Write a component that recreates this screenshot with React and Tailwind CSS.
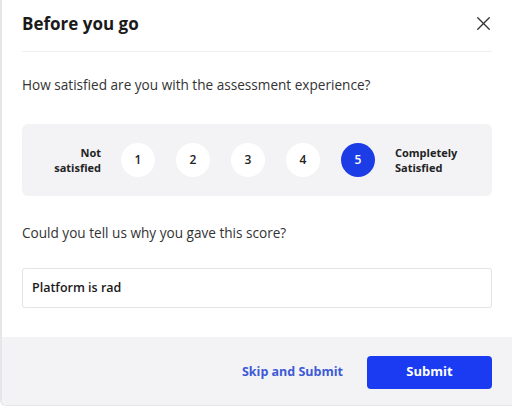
import { X } from "lucide-react";

export default function App() {
  const scores = [1, 2, 3, 4, 5];
  const selected = 5;

  return (
    <div
      className="w-[512px] h-[407px] overflow-hidden bg-white"
      style={{ fontFamily: '"Open Sans", sans-serif' }}
    >
      <div className="h-[406px] flex flex-col border-l-2 border-b border-[#e6e6ea] rounded-bl-md bg-white text-[#222]">
        {/* Header */}
        <div className="mx-[20px] h-[52px] flex items-center justify-between border-b border-[#efeff2]">
          <h2 className="text-[17px] font-bold text-[#1a1a1a] leading-none mt-[-4px]">Before you go</h2>
          <button type="button" className="mr-[-3px] mt-[-4px] text-[#333]">
            <X size={23} strokeWidth={1.4} />
          </button>
        </div>

        {/* Body */}
        <div className="px-[20px] flex-1">
          <p className="mt-[23px] text-[13.6px] text-[#333] leading-5">
            How satisfied are you with the assessment experience?
          </p>

          <div className="mt-[29px] h-[72px] rounded-md bg-[#f3f3f6] flex items-center justify-center gap-[20px]">
            <div className="w-[62px] text-right text-[11px] font-bold leading-[15px] text-[#222]">
              Not<br />satisfied
            </div>
            <div className="flex gap-[21px]">
              {scores.map((n) => (
                <div
                  key={n}
                  className={`w-[34px] h-[34px] rounded-full flex items-center justify-center text-[12px] font-semibold ${
                    n === selected ? "bg-[#1c3de6] text-white" : "bg-white text-[#222]"
                  }`}
                >
                  {n}
                </div>
              ))}
            </div>
            <div className="w-[80px] text-left text-[11px] font-bold leading-[15px] text-[#222]">
              Completely<br />Satisfied
            </div>
          </div>

          <p className="mt-[27px] text-[13.6px] text-[#333] leading-5">
            Could you tell us why you gave this score?
          </p>

          <div className="mt-[25px] h-[40px] border border-[#e4e4e8] rounded-[3px] flex items-center px-[9px]">
            <span className="text-[12.5px] font-semibold text-[#1a1a1a]">Platform is rad</span>
          </div>
        </div>

        {/* Footer */}
        <div className="h-[68px] bg-[#f3f3f6] rounded-bl-md flex items-center justify-end gap-[24px] pr-[20px] pt-[2px]">
          <button type="button" className="text-[12.5px] font-bold text-[#3c5ad6] ml-[2px]">
            Skip and Submit
          </button>
          <button
            type="button"
            className="w-[125px] h-[33px] rounded-[4px] bg-[#1a3bf2] text-white text-[13px] font-bold"
          >
            Submit
          </button>
        </div>
      </div>
    </div>
  );
}
